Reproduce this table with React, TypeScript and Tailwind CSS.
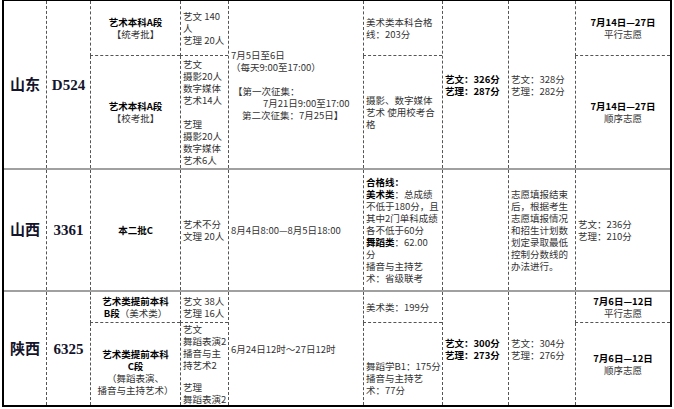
import type { ReactNode } from "react";
import clsx from "clsx";

const dash = "border-dashed border-[#555]";

function Cell({
  span,
  first,
  split,
  center,
  top,
  className,
  children,
}: {
  span?: boolean;
  first?: boolean;
  split?: boolean;
  center?: boolean;
  top?: boolean;
  className?: string;
  children?: ReactNode;
}) {
  return (
    <div
      className={clsx(
        "flex flex-col overflow-hidden whitespace-nowrap",
        top ? "justify-start" : "justify-center",
        !first && "border-l",
        split && "border-b",
        (!first || split) && dash,
        span && "row-span-2",
        center ? "items-center text-center" : "items-start pl-[2px]",
        className
      )}
    >
      {children}
    </div>
  );
}

const Gap = () => <div className="h-[12px]" />;

function Province({ name, code }: { name: string; code: string }) {
  return (
    <>
      <Cell span first center>
        <span className="font-['Liberation_Serif','Noto_Sans_CJK_SC',serif] text-[15px] font-bold leading-[20px] text-[#14142b]">
          {name}
        </span>
      </Cell>
      <Cell span center>
        <span className="font-['Liberation_Serif',serif] text-[15px] font-bold leading-[20px] text-[#14142b]">
          {code}
        </span>
      </Cell>
    </>
  );
}

function Scores({ a, b, bold }: { a: string; b: string; bold?: boolean }) {
  return (
    <>
      <div className={bold ? "font-bold text-black" : ""}>艺文：{a}分</div>
      <div className={bold ? "font-bold text-black" : ""}>艺理：{b}分</div>
    </>
  );
}

function Window({ date, kind }: { date: string; kind: string }) {
  return (
    <>
      <div className="font-bold text-black">{date}</div>
      <div>{kind}</div>
    </>
  );
}

export default function App() {
  return (
    <div className="bg-white w-[674px] h-[409px] pl-[2px] font-['Noto_Sans_CJK_SC',sans-serif] text-[9.5px] leading-[12px] text-[#333]">
      <div className="w-[670px] border-x-2 border-t border-b-2 border-black">
        {/* 山东 */}
        <div className="grid grid-cols-[42px_44px_90px_48px_135px_79px_66px_67px_95px] grid-rows-[55px_112px] border-b-2 border-[#a0a0a0]">
          <Province name="山东" code="D524" />
          <Cell split center>
            <div className="font-bold text-black">艺术本科A段</div>
            <div>【统考批】</div>
          </Cell>
          <Cell split>
            <div>艺文 140</div>
            <div>人</div>
            <div>艺理 20人</div>
          </Cell>
          <Cell span>
            <div>7月5日至6日</div>
            <div>（每天9:00至17:00）</div>
            <Gap />
            <div className="pl-[2px]">【第一次征集：</div>
            <div className="pl-[32px]">7月21日9:00至17:00</div>
            <div className="pl-[11px]">第二次征集：7月25日】</div>
          </Cell>
          <Cell split>
            <div>美术类本科合格</div>
            <div>线：203分</div>
          </Cell>
          <Cell span>
            <Scores a="326" b="287" bold />
          </Cell>
          <Cell span>
            <Scores a="328" b="282" />
          </Cell>
          <Cell split center>
            <Window date="7月14日—27日" kind="平行志愿" />
          </Cell>

          <Cell center>
            <div className="font-bold text-black">艺术本科A段</div>
            <div>【校考批】</div>
          </Cell>
          <Cell>
            <div>艺文</div>
            <div>摄影20人</div>
            <div>数字媒体</div>
            <div>艺术14人</div>
            <Gap />
            <div>艺理</div>
            <div>摄影20人</div>
            <div>数字媒体</div>
            <div>艺术6人</div>
          </Cell>
          <Cell>
            <div>摄影、数字媒体</div>
            <div>艺术 使用校考合</div>
            <div>格</div>
          </Cell>
          <Cell center>
            <Window date="7月14日—27日" kind="顺序志愿" />
          </Cell>
        </div>

        {/* 山西 */}
        <div className="grid grid-cols-[42px_44px_90px_48px_135px_79px_66px_67px_95px] grid-rows-[120px] border-b-2 border-[#a0a0a0]">
          <Province name="山西" code="3361" />
          <Cell center>
            <div className="font-bold text-black">本二批C</div>
          </Cell>
          <Cell>
            <div>艺术不分</div>
            <div>文理 20人</div>
          </Cell>
          <Cell>
            <div>8月4日8:00—8月5日18:00</div>
          </Cell>
          <Cell>
            <div className="font-bold text-black">合格线：</div>
            <div>
              <span className="font-bold text-black">美术类</span>：总成绩
            </div>
            <div>不低于180分，且</div>
            <div>其中2门单科成绩</div>
            <div>各不低于60分</div>
            <div>
              <span className="font-bold text-black">舞蹈类</span>：62.00
            </div>
            <div>分</div>
            <div>播音与主持艺</div>
            <div>术：省级联考</div>
          </Cell>
          <Cell />
          <Cell>
            <div>志愿填报结束</div>
            <div>后，根据考生</div>
            <div>志愿填报情况</div>
            <div>和招生计划数</div>
            <div>划定录取最低</div>
            <div>控制分数线的</div>
            <div>办法进行。</div>
          </Cell>
          <Cell>
            <Scores a="236" b="210" />
          </Cell>
          <Cell />
        </div>

        {/* 陕西 */}
        <div className="grid grid-cols-[42px_44px_90px_48px_135px_79px_66px_67px_95px] grid-rows-[31px_82px]">
          <Province name="陕西" code="6325" />
          <Cell split center>
            <div className="font-bold text-black">艺术类提前本科</div>
            <div>
              <span className="font-bold text-black">B段</span>（美术类）
            </div>
          </Cell>
          <Cell split>
            <div>艺文 38人</div>
            <div>艺理 16人</div>
          </Cell>
          <Cell span>
            <div>6月24日12时～27日12时</div>
          </Cell>
          <Cell split>
            <div>美术类：199分</div>
          </Cell>
          <Cell span>
            <Scores a="300" b="273" bold />
          </Cell>
          <Cell span>
            <Scores a="304" b="276" />
          </Cell>
          <Cell split center>
            <Window date="7月6日—12日" kind="平行志愿" />
          </Cell>

          <Cell center className="pt-[16px]">
            <div className="font-bold text-black">艺术类提前本科</div>
            <div className="font-bold text-black">C段</div>
            <div>（舞蹈表演、</div>
            <div>播音与主持艺术）</div>
          </Cell>
          <Cell top>
            <div>艺文</div>
            <div>舞蹈表演2</div>
            <div>播音与主</div>
            <div>持艺术2</div>
            <Gap />
            <div>艺理</div>
            <div>舞蹈表演2</div>
          </Cell>
          <Cell top className="pt-[37px]">
            <div>舞蹈学B1：175分</div>
            <div>播音与主持艺</div>
            <div>术：77分</div>
          </Cell>
          <Cell center>
            <Window date="7月6日—12日" kind="顺序志愿" />
          </Cell>
        </div>
      </div>
    </div>
  );
}
